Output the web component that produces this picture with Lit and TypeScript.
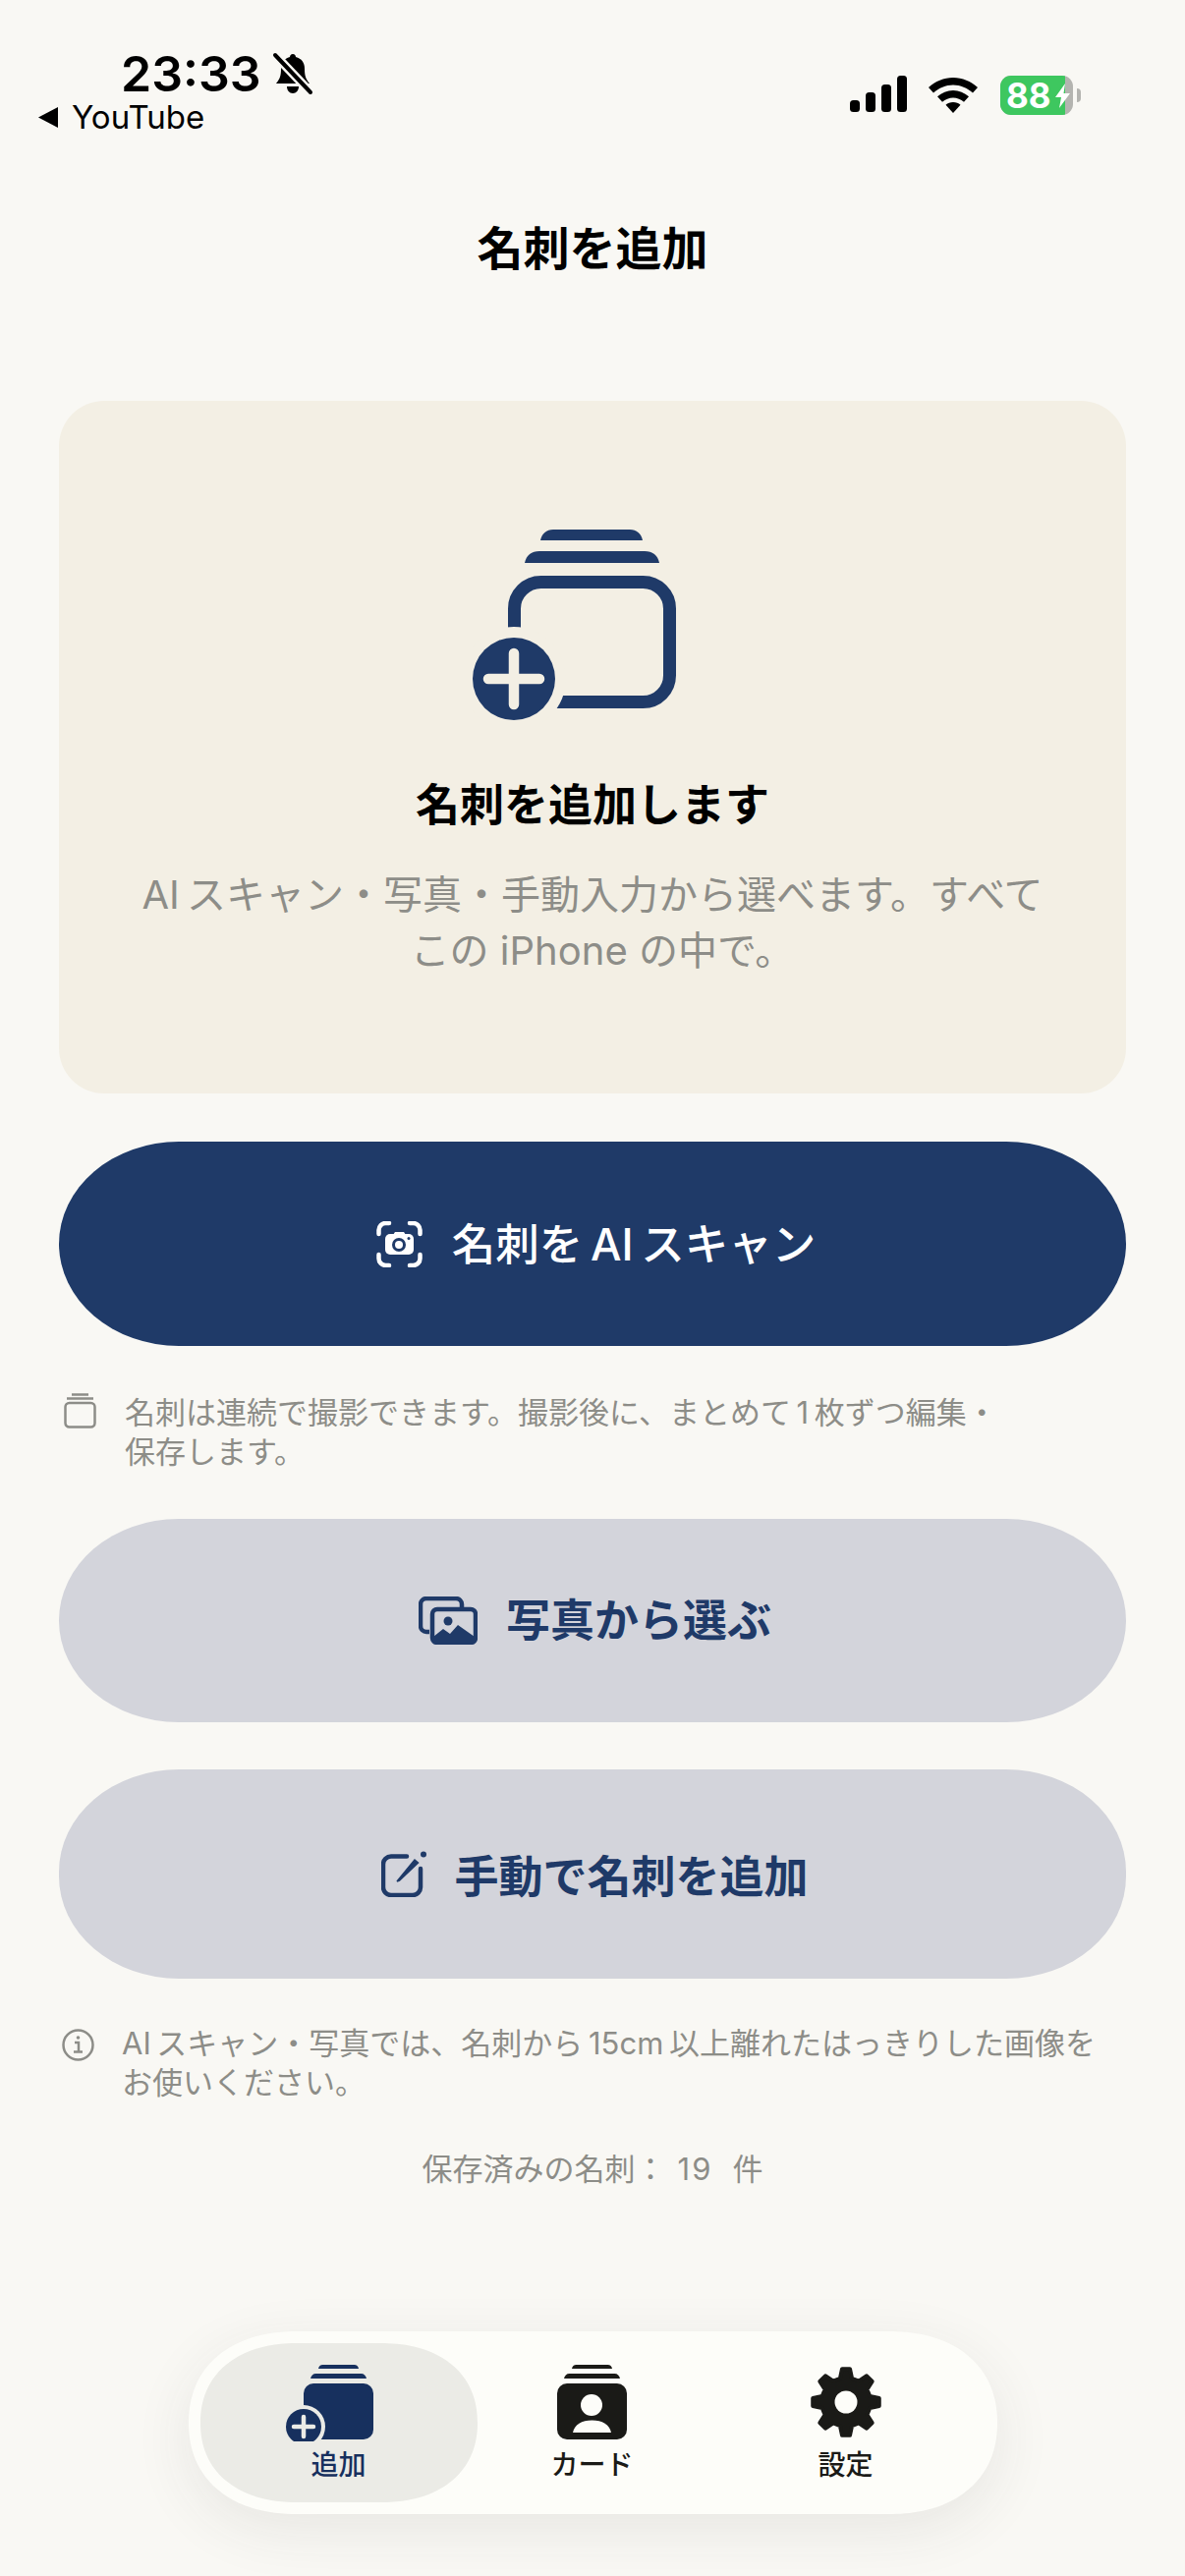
import { LitElement, html, css, svg } from "lit";
import { customElement } from "lit/decorators.js";

const NAVY = "#1f3a68";

// eight-tooth gear outline, centred on (cx, cy)
function gearPath(cx: number, cy: number, outer: number, inner: number) {
  const pts: string[] = [];
  const teeth = 8;
  for (let i = 0; i < teeth; i++) {
    const a = (i / teeth) * Math.PI * 2 - Math.PI / 2;
    const step = Math.PI / teeth;
    const corners: [number, number][] = [
      [inner, a - step * 0.62],
      [outer, a - step * 0.3],
      [outer, a + step * 0.3],
      [inner, a + step * 0.62],
    ];
    for (const [r, t] of corners) {
      pts.push(`${(cx + r * Math.cos(t)).toFixed(2)} ${(cy + r * Math.sin(t)).toFixed(2)}`);
    }
  }
  return "M" + pts.join("L") + "Z";
}

const stackBars = (fill: string) => svg`
  <path fill=${fill} d="M24 6c.5-2.500 2-4 4.500-4h32c2.500 0 4 1.500 4.500 4z" />
  <path fill=${fill} d="M16 16c.6-3 2.600-5 5.500-5h46c2.900 0 4.900 2 5.500 5z" />
`;

@customElement("app-root")
export class AppRoot extends LitElement {
  static styles = css`
    :host {
      display: block;
      width: 1206px;
      min-height: 2622px;
      background: #f9f8f4;
      font-family: Inter, "Noto Sans CJK JP", sans-serif;
      color: #000;
      overflow: hidden;
    }
    svg {
      display: block;
      flex: none;
    }

    .status {
      height: 203px;
      display: flex;
      justify-content: space-between;
      box-sizing: border-box;
    }
    .status_left {
      padding: 50px 0 0 38px;
    }
    .time_row {
      display: flex;
      align-items: center;
      gap: 11px;
      padding-left: 85px;
      height: 50px;
      font-size: 50px;
      line-height: 50px;
      font-weight: 600;
    }
    .back_row {
      display: flex;
      align-items: center;
      gap: 13px;
      height: 36px;
      margin-top: 1px;
      font-size: 33px;
      line-height: 36px;
    }
    .status_right {
      display: flex;
      align-items: flex-start;
      padding: 77px 106px 0 0;
    }
    .wifi {
      margin: 2px 23px 0 22px;
    }
    .battery {
      position: relative;
      width: 74px;
      height: 40px;
      border-radius: 11px;
      overflow: hidden;
      background: #b4b4b0;
      color: #fff;
      font-size: 35px;
      line-height: 40px;
      font-weight: 700;
      padding-left: 6px;
      box-sizing: border-box;
    }
    .battery_fill {
      position: absolute;
      inset: 0 8px 0 0;
      background: #3ec75f;
    }
    .battery span {
      position: relative;
    }
    .battery svg {
      position: absolute;
      right: 3px;
      top: 8px;
    }
    .nub {
      width: 4px;
      height: 14px;
      margin: 13px 0 0 4px;
      border-radius: 0 4px 4px 0;
      background: #b4b4b0;
    }

    .title {
      height: 100px;
      margin: 0;
      font-size: 47px;
      line-height: 100px;
      font-weight: 700;
      text-align: center;
    }

    .content {
      padding: 105px 60px 0;
    }
    .hero {
      height: 705px;
      box-sizing: border-box;
      padding-top: 122px;
      border-radius: 46px;
      background: #f3efe4;
      display: flex;
      flex-direction: column;
      align-items: center;
    }
    .hero h2 {
      margin: 48px 0 0;
      font-size: 45px;
      line-height: 70px;
      font-weight: 700;
    }
    .hero p {
      margin: 27px 0 0;
      font-size: 40px;
      line-height: 57px;
      color: #8d8d88;
      text-align: center;
    }
    .hero p span {
      margin-left: 20px;
    }

    .btn {
      display: flex;
      align-items: center;
      justify-content: center;
      border-radius: 122px / 104px;
      font-size: 45px;
      font-weight: 700;
    }
    .lift {
      margin-top: -6px;
    }
    .primary {
      height: 208px;
      margin-top: 49px;
      padding-left: 7px;
      gap: 30px;
      background: #1f3a68;
      color: #fff;
      font-size: 44.500px;
      font-weight: 500;
    }
    .secondary {
      background: #d3d4db;
      color: #1f3a68;
    }
    .photos {
      height: 207px;
      margin-top: 48px;
      padding-left: 5px;
      gap: 29px;
    }
    .manual {
      height: 213px;
      margin-top: 48px;
      padding-left: 5px;
      gap: 27px;
    }

    .hint {
      display: flex;
      font-size: 31px;
      line-height: 40px;
      color: #8d8d88;
    }
    .hint_note {
      margin-top: 48px;
      gap: 29px;
      padding-left: 5px;
    }
    .hint_info {
      margin-top: 46px;
      gap: 28px;
      padding-left: 3px;
    }
    .hint_info svg {
      margin-top: 5px;
    }
    .saved {
      margin-top: 46px;
      font-size: 31px;
      line-height: 44px;
      color: #8d8d88;
      text-align: center;
    }
    .saved span {
      margin: 0 20px 0 12px;
      letter-spacing: 2px;
    }

    .nav {
      width: 823px;
      height: 186px;
      margin: 143px auto 0;
      box-sizing: border-box;
      padding: 12px 24px;
      display: flex;
      border-radius: 110px / 93px;
      corner-shape: superellipse(1.15);
      background: #fdfdf9;
      box-shadow: 0 16px 60px rgba(60, 60, 50, 0.09);
    }
    .nav_item {
      width: 258px;
      height: 162px;
      box-sizing: border-box;
      padding-top: 20px;
      display: flex;
      flex-direction: column;
      align-items: center;
      font-size: 28px;
      line-height: 30px;
      font-weight: 500;
      color: #1a1a17;
    }
    .nav_item.active {
      width: 282px;
      margin: 0 -12px;
      border-radius: 98px / 81px;
      corner-shape: superellipse(1.15);
      background: #ebebe6;
      color: #17305e;
    }
    .nav_item span {
      margin-top: 9px;
    }
  `;

  private renderStatus() {
    return html`<div class="status">
      <div class="status_left">
        <div class="time_row">
          23:33
          <svg width="42" height="44" viewBox="0 0 42 44">
            <path d="M21 2c2 0 3 1.500 3 3 6 1.500 9 6 9 12 0 7 1 10 5 15H4c4-5 5-8 5-15 0-6 3-10.500 9-12 0-1.500 1-3 3-3z" />
            <path d="M15 35h12c0 4-2.500 7-6 7s-6-3-6-7z" />
            <path d="M3 3l36 38" stroke="#f9f8f4" stroke-width="9" />
            <path d="M3 3l36 38" stroke="#000" stroke-width="4" stroke-linecap="round" />
          </svg>
        </div>
        <div class="back_row">
          <svg width="22" height="23" viewBox="0 0 22 23"><path d="M21 1v21L1 11.500z" /></svg>
          YouTube
        </div>
      </div>
      <div class="status_right">
        <svg width="58" height="38" viewBox="0 0 58 38">
          <rect x="0" y="25" width="10" height="12" rx="3.500" />
          <rect x="16" y="17" width="10" height="20" rx="3.500" />
          <rect x="32" y="9" width="10" height="28" rx="3.500" />
          <rect x="48" y="0" width="10" height="37" rx="3.500" />
        </svg>
        <svg class="wifi" width="50" height="36" viewBox="0 0 50 36">
          <path d="M25 0c9.500 0 18 3.700 25 10l-5 5.500C39.500 10.500 32.500 7.500 25 7.500S10.500 10.500 5 15.500L0 10C7 3.700 15.500 0 25 0z" />
          <path d="M25 13c6 0 11.500 2.300 16 6.300l-5 5.500c-3-2.700-7-4.300-11-4.300s-8 1.600-11 4.300l-5-5.500c4.500-4 10-6.300 16-6.300z" />
          <path d="M25 25c3 0 5.500 1 7.500 2.800L25 36l-7.500-8.200C19.500 26 22 25 25 25z" />
        </svg>
        <div class="battery">
          <div class="battery_fill"></div>
          <span>88</span>
          <svg width="15" height="25" viewBox="0 0 15 25">
            <path fill="#fff" d="M10 0L0 14h6l-2 11 11-15H8.500z" />
          </svg>
        </div>
        <div class="nub"></div>
      </div>
    </div>`;
  }

  private renderHeroIcon() {
    // drawn in page coordinates, offset by the viewBox
    return html`<svg width="250" height="207" viewBox="478 530 250 207" fill=${NAVY}>
      <path d="M550 550c1.500-7 6-11 13-11h78c7 0 11.500 4 13 11z" />
      <path d="M534 573c1.500-8 7-12 15-12h107c8 0 13.500 4 15 12z" />
      <rect x="523.500" y="592.500" width="158" height="122" rx="27" fill="none" stroke=${NAVY} stroke-width="13" />
      <circle cx="523" cy="691" r="53" fill="#f3efe4" />
      <circle cx="523" cy="691" r="42" />
      <path d="M497 691h52M523 665v52" stroke="#f3efe4" stroke-width="10.500" stroke-linecap="round" />
    </svg>`;
  }

  private renderNav() {
    return html`<nav class="nav">
      <div class="nav_item active">
        <svg width="110" height="80" viewBox="-10 0 110 80" fill="#17305e">
          ${stackBars("#17305e")}
          <rect x="9" y="21" width="71" height="57" rx="10" />
          <circle cx="9" cy="65" r="22" fill="#ebebe6" />
          <circle cx="9" cy="65" r="18" />
          <path d="M-1 65h20M9 55v20" stroke="#ebebe6" stroke-width="4.500" stroke-linecap="round" />
        </svg>
        <span>追加</span>
      </div>
      <div class="nav_item">
        <svg width="110" height="80" viewBox="-10 0 110 80" fill="#1a1a17">
          ${stackBars("#1a1a17")}
          <rect x="9" y="21" width="71" height="57" rx="10" />
          <circle cx="44" cy="43" r="11" fill="#fdfdf9" />
          <path d="M25 71c1.500-8 9-12.500 19.500-12.500S62.500 63 64 71z" fill="#fdfdf9" />
        </svg>
        <span>カード</span>
      </div>
      <div class="nav_item">
        <svg width="110" height="80" viewBox="-10 0 110 80">
          <path d=${gearPath(45, 40, 34, 25)} fill="#1a1a17" stroke="#1a1a17" stroke-width="4" stroke-linejoin="round" />
          <circle cx="45" cy="40" r="11.500" fill="#fdfdf9" />
        </svg>
        <span>設定</span>
      </div>
    </nav>`;
  }

  render() {
    return html`
      ${this.renderStatus()}
      <h1 class="title">名刺を追加</h1>
      <div class="content">
        <section class="hero">
          ${this.renderHeroIcon()}
          <h2>名刺を追加します</h2>
          <p>AI\u2009スキャン・写真・手動入力から選べます。すべて<br /><span>この iPhone の中で。</span></p>
        </section>

        <div class="btn primary">
          <svg width="47" height="47" viewBox="0 0 47 47" fill="none" stroke="#fff" stroke-width="4.500" stroke-linecap="round">
            <path d="M2.500 13V9a7 7 0 0 1 7-7H13M34 2h3.500a7 7 0 0 1 7 7v4M44.500 34v4a7 7 0 0 1-7 7H34M13 45H9.500a7 7 0 0 1-7-7v-4" />
            <rect x="9" y="13" width="29" height="21" rx="5" fill="#fff" stroke="none" />
            <path d="M17 14l2-3h9l2 3z" fill="#fff" stroke="none" />
            <circle cx="23" cy="24" r="7" fill=${NAVY} stroke="none" />
            <circle cx="23" cy="24" r="4" fill="#fff" stroke="none" />
            <circle cx="33" cy="17.500" r="1.500" fill=${NAVY} stroke="none" />
          </svg>
          <span class="lift">名刺を\u2009AI\u2009スキャン</span>
        </div>

        <div class="hint hint_note">
          <svg width="33" height="36" viewBox="0 0 33 36" fill="none" stroke="#8d8d88" stroke-width="2.500">
            <rect x="1.500" y="10" width="30" height="24.500" rx="4" />
            <path d="M3 5.500h27M8 1.500h17" />
          </svg>
          <div>名刺は連続で撮影できます。撮影後に、まとめて\u20091\u2009枚ずつ編集・<br />保存します。</div>
        </div>

        <div class="btn secondary photos">
          <svg width="60" height="49" viewBox="0 0 60 49" fill="none" stroke=${NAVY} stroke-width="4.500">
            <path d="M11 36H8a6 6 0 0 1-6-6V8a6 6 0 0 1 6-6h30a6 6 0 0 1 6 6v3" />
            <rect x="14" y="13" width="44" height="34" rx="5" />
            <circle cx="30" cy="25" r="4.500" fill=${NAVY} stroke="none" />
            <path d="M15 41l10-8 7 5 8-9 17 12v5H15z" fill=${NAVY} stroke="none" />
          </svg>
          <span class="lift">写真から選ぶ</span>
        </div>

        <div class="btn secondary manual">
          <svg width="47" height="47" viewBox="0 0 47 47" fill="none" stroke=${NAVY} stroke-width="4.500">
            <path d="M26 5.500H10a8 8 0 0 0-8 8V37a8 8 0 0 0 8 8h22a8 8 0 0 0 8-8V18" stroke-linecap="round" />
            <path d="M16 31l18-22 3.500 3L18.500 30z" fill=${NAVY} stroke-width="1.500" />
            <circle cx="43" cy="3.500" r="3" fill=${NAVY} stroke="none" />
          </svg>
          手動で名刺を追加
        </div>

        <div class="hint hint_info">
          <svg width="33" height="33" viewBox="0 0 33 33" fill="none" stroke="#8d8d88" stroke-width="2.500">
            <circle cx="16.500" cy="16.500" r="15" />
            <path d="M13 14h4v9M12 23.500h9" />
            <circle cx="16.500" cy="9" r="1.800" fill="#8d8d88" stroke="none" />
          </svg>
          <div>AI\u2009スキャン・写真では、名刺から\u200915cm\u2009以上離れたはっきりした画像を<br />お使いください。</div>
        </div>

        <div class="saved">保存済みの名刺：<span>19</span>件</div>
      </div>
      ${this.renderNav()}
    `;
  }
}
